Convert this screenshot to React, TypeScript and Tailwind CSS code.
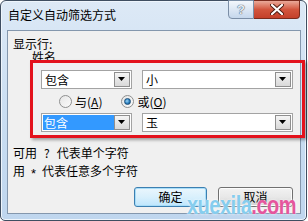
import React from 'react'

// --- Small Win7-style parts ---

function DropArrow() {
  return (
    <div className="flex h-full w-[16px] items-center justify-center border border-[#8f8f8f] bg-gradient-to-b from-[#f5f5f5] to-[#d9d9d9]">
      <svg width="8" height="5" viewBox="0 0 8 5">
        <path d="M0 0 H7 L3.5 4 Z" fill="#000" />
      </svg>
    </div>
  )
}

function Combo({
  value,
  width,
  selected,
}: {
  value: string
  width: string
  selected?: boolean
}) {
  return (
    <div
      className={`flex h-[19px] ${width} items-stretch border border-[#a3a3a3] bg-white p-[1px]`}
    >
      <div className="flex flex-1 items-center overflow-hidden">
        <span
          className={
            selected
              ? 'flex h-full w-full items-center bg-[#3399ff] pl-[1px] text-white'
              : 'pl-[2px] text-black'
          }
        >
          {value}
        </span>
      </div>
      <DropArrow />
    </div>
  )
}

function Radio({ checked, label, hot }: { checked?: boolean; label: string; hot: string }) {
  return (
    <div className="flex items-center gap-[3px]">
      <div className="flex h-[13px] w-[13px] items-center justify-center rounded-full border border-[#8e8f8f] bg-gradient-to-br from-[#e6e6e6] to-[#fbfbfb]">
        {checked && (
          <div className="h-[7px] w-[7px] rounded-full border border-[#1b4f7a] bg-[radial-gradient(circle_at_40%_40%,#9fd6f5,#2a7fc0_55%,#0f3f6b)]" />
        )}
      </div>
      <span className="text-[12px] leading-[13px] text-black">
        {label}(<span className="underline underline-offset-1">{hot}</span>)
      </span>
    </div>
  )
}

function Button({ label, primary, width }: { label: string; primary?: boolean; width: string }) {
  return (
    <div
      className={`flex h-[20px] ${width} items-center justify-center rounded-[3px] border ${
        primary
          ? 'border-[#3c7fb1] bg-gradient-to-b from-[#eaf6fd] via-[#d9f0fc] to-[#bee6fd] shadow-[inset_0_0_0_1px_#a8ddf8]'
          : 'border-[#707070] bg-gradient-to-b from-[#f2f2f2] via-[#e8e8e8] to-[#cfcfcf] shadow-[inset_0_0_0_1px_#fcfcfc]'
      }`}
    >
      <span className="text-[12px] leading-[12px] text-black">{label}</span>
    </div>
  )
}

export default function App() {
  return (
    <div className="relative h-[221px] w-[308px] overflow-hidden bg-white font-['Noto_Sans_CJK_SC','Noto_Sans_CJK_JP',sans-serif]">
      {/* Window frame */}
      <div className="flex h-[221px] w-[307px] flex-col rounded-t-[6px] rounded-b-[5px] border border-[#3f4e61] bg-gradient-to-b from-[#dde9f6] via-[#cadef2] to-[#bfd6ee] pb-[6px] pl-[6px] pr-[5px] shadow-[inset_0_0_0_1px_#eef5fc]">
        {/* Title bar */}
        <div className="flex h-[29px] items-start">
          <span className="ml-[1px] mt-[7px] text-[12px] leading-[14px] text-black">
            自定义自动筛选方式
          </span>
          <div className="-mt-[1px] ml-auto mr-[1px] flex">
            <div className="flex h-[19px] w-[26px] items-center justify-center rounded-bl-[4px] border border-[#7b8ea6] bg-gradient-to-b from-[#f3f7fc] via-[#dce7f4] to-[#c5d7ec]">
              <span className="font-['Liberation_Sans',sans-serif] text-[13px] font-bold leading-[13px] text-[#e9eef5] [text-shadow:0_0_1px_#3a4b60,0_0_1px_#3a4b60]">
                ?
              </span>
            </div>
            <div className="flex h-[19px] w-[46px] items-center justify-center rounded-br-[4px] border border-l-0 border-[#7a2b1d] bg-gradient-to-b from-[#e9a999] via-[#d2553d] to-[#c4402a]">
              <svg width="14" height="11" viewBox="0 0 14 11">
                <path
                  d="M2 1 L12 10 M12 1 L2 10"
                  stroke="#4a1a10"
                  strokeWidth="4"
                  strokeLinecap="round"
                />
                <path
                  d="M2 1 L12 10 M12 1 L2 10"
                  stroke="#ffffff"
                  strokeWidth="2.2"
                  strokeLinecap="round"
                />
              </svg>
            </div>
          </div>
        </div>

        {/* Client area */}
        <div className="flex flex-1 flex-col border border-[#8497ad] bg-[#f0f0f0] pl-[5px] pr-[7px] pt-[7px] text-[12px] leading-[12px] text-black">
          <div>显示行:</div>
          <div className="ml-[19px] mt-[1px]">姓名</div>

          <div className="ml-[28px] mt-[7px] flex gap-[10px]">
            <Combo value="包含" width="w-[91px]" />
            <Combo value="小" width="w-[151px]" />
          </div>

          <div className="ml-[46px] mt-[6px] flex gap-[19px]">
            <Radio label="与" hot="A" />
            <Radio label="或" hot="O" checked />
          </div>

          <div className="ml-[28px] mt-[5px] flex gap-[10px]">
            <Combo value="包含" width="w-[91px]" selected />
            <Combo value="玉" width="w-[151px]" />
          </div>

          <div className="mt-[15px]">
            可用<span className="mx-[7px]">?</span>代表单个字符
          </div>
          <div className="mt-[6px]">
            用
            <span className="mx-[6px] inline-block translate-y-[2px] font-['Liberation_Sans',sans-serif] text-[13px]">
              *
            </span>
            代表任意多个字符
          </div>

          <div className="mt-[9px] flex justify-end gap-[11px]">
            <Button label="确定" width="w-[73px]" primary />
            <Button label="取消" width="w-[75px]" />
          </div>
        </div>
      </div>

      {/* Red annotation box */}
      <div className="absolute left-[30px] top-[60px] h-[78px] w-[275px] border-[3px] border-[#e3121c] shadow-[2px_2px_3px_rgba(0,0,0,0.35)]" />

      {/* Watermark */}
      <div className="absolute left-[187px] top-[198px] origin-bottom scale-y-[1.25] font-['Liberation_Sans',sans-serif] text-[20px] font-bold leading-[20px] tracking-[-0.5px] [text-shadow:0_0_2px_#ffffff]">
        <span className="text-[#86cdee]">xuexila</span>
        <span className="text-[#e5569d]">.com</span>
      </div>
    </div>
  )
}
